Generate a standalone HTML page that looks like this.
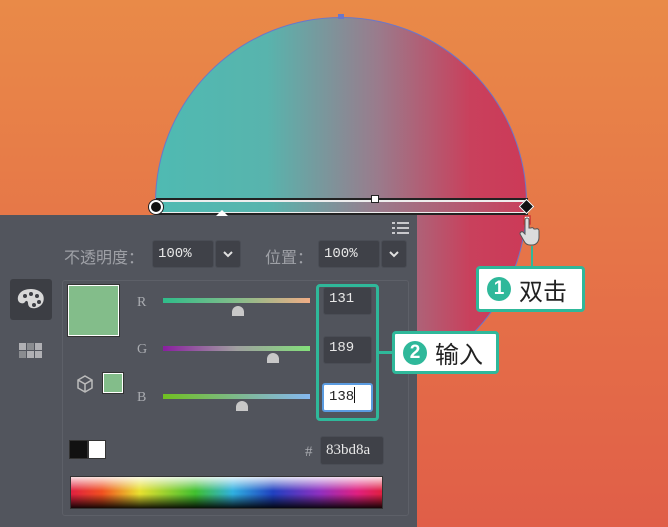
<!DOCTYPE html>
<html><head><meta charset="utf-8"><style>
*{margin:0;padding:0;box-sizing:border-box}
body{width:668px;height:527px;overflow:hidden;position:relative;background:linear-gradient(180deg,#e98a48 0%,#e56f48 60%,#e05e48 100%);font-family:"Liberation Sans","Noto Sans CJK SC",sans-serif}
.abs{position:absolute}
.circle{left:155px;top:17px;width:372px;height:372px;border-radius:50%;background:linear-gradient(90deg,#4fbab2 0%,#58b4ad 30%,#9a7b8c 60%,#c9405c 85%,#cc3a58 100%);border:1.5px solid #6b77c9}
.panel{left:0;top:215px;width:417px;height:312px;background:#52555d}
.inner{left:62px;top:280px;width:347px;height:236px;background:#51545c;border:1px solid #5d6068;border-radius:3px}
.lbl{color:#9ea0a6;font-size:16px}
.box{background:#3f4148;border:1px solid #4a4d55;border-radius:3px;color:#e8e8e8;font-family:"Liberation Mono",monospace;font-size:14px;padding-left:5px}
.rl{color:#a9abb0;font-family:"Liberation Serif",serif;font-size:14px}
.thumb{width:12px;height:10px;background:#c8c8c8;border-radius:6px 6px 0 0}
.call{background:#fff;border:3px solid #2fb89a;border-radius:4px;font-size:24px;color:#222;display:flex;align-items:center;padding-left:8px}
.num{width:24px;height:24px;border-radius:50%;background:#2fb89a;color:#fff;font-size:19px;font-weight:bold;display:flex;align-items:center;justify-content:center;margin-right:8px}
</style></head><body>
<div class="abs circle"></div>
<div class="abs" style="left:338px;top:14px;width:6px;height:5px;background:#6b77c9"></div>
<div class="abs" style="left:156px;top:198px;width:372px;height:17px;background:linear-gradient(90deg,#4fbab2 0%,#58b4ad 30%,#9a7b8c 60%,#c9405c 100%);border:2px solid #222"></div>
<div class="abs" style="left:158px;top:200px;width:368px;height:2px;background:#eee"></div>
<div class="abs" style="left:158px;top:212px;width:368px;height:1px;background:#eee"></div>
<div class="abs" style="left:371px;top:195px;width:8px;height:8px;background:#fff;border:1px solid #222"></div>
<div class="abs" style="left:149px;top:200px;width:14px;height:14px;border-radius:50%;background:#111;border:2px solid #fff;box-shadow:0 0 0 1px #222"></div>
<div class="abs" style="left:521px;top:201px;width:11px;height:11px;background:#111;transform:rotate(45deg);border:1px solid #fff"></div>
<svg class="abs" style="left:516px;top:214px" width="30" height="32" viewBox="0 0 30 32"><path d="M8 2 h6 v8 h-6z" fill="#fff" stroke="#c33" stroke-width="1.5"/><path d="M9 12 v-6 a2 2 0 0 1 4 0 v8 l2 0 a2 2 0 0 1 3 1 l2 0 a2 2 0 0 1 3 2 v6 c0 5 -3 8 -7 8 h-2 c-3 0 -5 -2 -6 -4 l-4 -7 a2 2 0 0 1 3 -2 l2 2z" fill="#dcdcdc" stroke="#555" stroke-width="1"/></svg>
<div class="abs" style="left:531px;top:246px;width:2px;height:20px;background:#2fb89a"></div>
<div class="abs call" style="left:476px;top:266px;width:109px;height:46px"><span class="num">1</span>双击</div>

<div class="abs panel"></div>
<div class="abs" style="left:216px;top:210px;width:0;height:0;border-left:6px solid transparent;border-right:6px solid transparent;border-bottom:6px solid #fff"></div>
<svg class="abs" style="left:392px;top:221px" width="18" height="14"><g fill="#c8c8cc"><rect x="0" y="1" width="3" height="2"/><rect x="5" y="1" width="12" height="2"/><rect x="0" y="6" width="3" height="2"/><rect x="5" y="6" width="12" height="2"/><rect x="0" y="11" width="3" height="2"/><rect x="5" y="11" width="12" height="2"/></g></svg>
<div class="abs lbl" style="left:64px;top:244px">不透明度：</div>
<div class="abs box" style="left:152px;top:240px;width:62px;height:28px;line-height:26px">100%</div>
<div class="abs box" style="left:215px;top:240px;width:26px;height:28px"></div>
<svg class="abs" style="left:222px;top:250px" width="12" height="8"><path d="M2 2 L6 6 L10 2" fill="none" stroke="#e0e0e0" stroke-width="2"/></svg>
<div class="abs lbl" style="left:265px;top:244px">位置：</div>
<div class="abs box" style="left:318px;top:240px;width:62px;height:28px;line-height:26px">100%</div>
<div class="abs box" style="left:381px;top:240px;width:26px;height:28px"></div>
<svg class="abs" style="left:388px;top:250px" width="12" height="8"><path d="M2 2 L6 6 L10 2" fill="none" stroke="#e0e0e0" stroke-width="2"/></svg>
<div class="abs" style="left:10px;top:279px;width:42px;height:41px;background:#3c3e44;border-radius:3px"></div>
<svg class="abs" style="left:16px;top:287px" width="30" height="24"><path d="M15 2 C5 2 1 8 2 13 C3 17 8 17 9 15 C10 13 12 14 12 16 C12 20 15 22 20 21 C27 19 29 13 27 8 C25 4 20 2 15 2z" fill="#d8d8d8"/><g fill="#3c3e44"><circle cx="9" cy="9" r="2"/><circle cx="15" cy="7" r="2"/><circle cx="21" cy="9" r="2"/><circle cx="23" cy="15" r="2"/><circle cx="18" cy="18" r="2"/></g></svg>
<svg class="abs" style="left:19px;top:343px" width="24" height="16"><g fill="#b0b0b4"><rect x="0" y="0" width="7" height="7"/><rect x="8" y="0" width="7" height="7" fill="#8a8c90"/><rect x="16" y="0" width="7" height="7"/><rect x="0" y="8" width="7" height="7" fill="#8a8c90"/><rect x="8" y="8" width="7" height="7"/><rect x="16" y="8" width="7" height="7"/></g></svg>
<div class="abs inner"></div>
<div class="abs" style="left:68px;top:285px;width:51px;height:51px;background:#83bd8a;border:1px solid #fff;box-shadow:0 0 0 1px #333"></div>
<svg class="abs" style="left:76px;top:375px" width="18" height="18"><path d="M9 1 L16 5 L16 13 L9 17 L2 13 L2 5Z M2 5 L9 9 L16 5 M9 9 L9 17" fill="none" stroke="#bbb" stroke-width="1.5"/></svg>
<div class="abs" style="left:103px;top:373px;width:20px;height:20px;background:#83bd8a;border:1px solid #fff;box-shadow:0 0 0 1px #333"></div>
<div class="abs rl" style="left:137px;top:295px">R</div>
<div class="abs rl" style="left:137px;top:342px">G</div>
<div class="abs rl" style="left:137px;top:390px">B</div>
<div class="abs" style="left:163px;top:298px;width:147px;height:5px;background:linear-gradient(90deg,#2fbd8a,#83bd8a,#f0ad86)"></div>
<div class="abs" style="left:163px;top:346px;width:147px;height:5px;background:linear-gradient(90deg,#8a1ea0,#a0a0a0 50%,#83e07a)"></div>
<div class="abs" style="left:163px;top:394px;width:147px;height:5px;background:linear-gradient(90deg,#70c020,#80b8a0 60%,#85b8f0)"></div>
<div class="abs thumb" style="left:232px;top:306px"></div>
<div class="abs thumb" style="left:267px;top:353px"></div>
<div class="abs thumb" style="left:236px;top:401px"></div>
<div class="abs box" style="left:323px;top:287px;width:49px;height:28px;line-height:22px">131</div>
<div class="abs box" style="left:323px;top:336px;width:49px;height:28px;line-height:22px">189</div>
<div class="abs box" style="left:322px;top:383px;width:51px;height:29px;line-height:24px;background:#fff;color:#222;border:2px solid #5a9be0">138<span style="display:inline-block;width:1px;height:16px;background:#111;vertical-align:-3px"></span></div>
<div class="abs" style="left:316px;top:284px;width:63px;height:137px;border:3px solid #2fb89a;border-radius:4px"></div>
<div class="abs" style="left:379px;top:351px;width:14px;height:3px;background:#2fb89a"></div>
<div class="abs call" style="left:392px;top:331px;width:107px;height:43px"><span class="num">2</span>输入</div>
<div class="abs" style="left:69px;top:440px;width:19px;height:19px;background:#111;border:1px solid #333"></div>
<div class="abs" style="left:88px;top:440px;width:18px;height:19px;background:#fff;border:1px solid #333"></div>
<div class="abs rl" style="left:305px;top:444px;font-size:15px">#</div>
<div class="abs box" style="left:320px;top:436px;width:64px;height:29px;line-height:26px;font-family:'Liberation Serif',serif;font-size:15px">83bd8a</div>
<div class="abs" style="left:70px;top:476px;width:313px;height:33px;background:linear-gradient(180deg,rgba(255,255,255,.85),rgba(255,255,255,0) 45%,rgba(0,0,0,0) 55%,rgba(0,0,0,.9)),linear-gradient(90deg,#e02040,#f05020 10%,#e8e030 22%,#40c030 40%,#30b0e0 52%,#2040c0 65%,#9030c0 80%,#e02080 92%,#e02040);border:1px solid #333"></div>
</body></html>
